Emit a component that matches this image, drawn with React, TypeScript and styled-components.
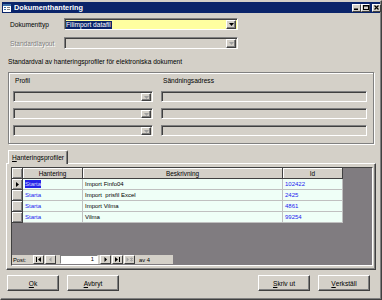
import React from "react";
import styled, { createGlobalStyle } from "styled-components";

const rows = [
  { action: "Starta", text: "Import Finfo04", id: "102422" },
  { action: "Starta", text: "Import  prisfil Excel", id: "2425" },
  { action: "Starta", text: "Import Vilma", id: "4861" },
  { action: "Starta", text: "Vilma", id: "99254" },
];

const GlobalStyle = createGlobalStyle`
  html, body { margin: 0; padding: 0; background: #d4d0c8; }
  body {
    font-family: "Liberation Sans", Arial, sans-serif;
    font-size: 6.6px;
    color: #000;
  }
`;

const Arrow = ({ disabled }: { disabled?: boolean }) => (
  <svg width="5" height="3" viewBox="0 0 5 3">
    <path d="M0 0h5L2.5 3z" fill={disabled ? "#a0a0a0" : "#000"} />
  </svg>
);

const NavGlyph = ({ kind }: { kind: string }) => (
  <svg width="9" height="5" viewBox="0 0 9 5">
    {kind === "first" && (
      <>
        <rect x="2" y="0" width="1" height="5" fill="#000" />
        <path d="M7 0v5L4 2.5z" fill="#000" />
      </>
    )}
    {kind === "prev" && <path d="M5.5 0v5L3 2.5z" fill="#a0a0a0" />}
    {kind === "next" && <path d="M3.5 0v5L6 2.5z" fill="#000" />}
    {kind === "last" && (
      <>
        <path d="M2 0v5L5 2.5z" fill="#000" />
        <rect x="6" y="0" width="1" height="5" fill="#000" />
      </>
    )}
    {kind === "new" && (
      <>
        <path d="M1.5 0v5L4 2.5z" fill="#a0a0a0" />
        <path d="M5 1l3 3M8 1L5 4M6.5 0.5v4" stroke="#a0a0a0" strokeWidth="0.8" />
      </>
    )}
  </svg>
);

export default function App() {
  return (
    <>
      <GlobalStyle />
      <Window>
        <TitleBar>
          <TitleIcon width="8" height="8" viewBox="0 0 8 8">
            <rect x="0" y="0" width="8" height="8" fill="#fff" />
            <rect x="0" y="0" width="8" height="2" fill="#3a6ea5" />
            <rect x="1" y="3" width="2" height="1" fill="#3a6ea5" />
            <rect x="4" y="3" width="3" height="1" fill="#808080" />
            <rect x="1" y="5" width="2" height="1" fill="#3a6ea5" />
            <rect x="4" y="5" width="3" height="1" fill="#808080" />
          </TitleIcon>
          <TitleText>Dokumenthantering</TitleText>
          <Controls>
            <CtrlButton>
              <svg width="5" height="5" viewBox="0 0 5 5">
                <rect x="0" y="3.5" width="4" height="1.5" fill="#000" />
              </svg>
            </CtrlButton>
            <CtrlButton>
              <svg width="6" height="5" viewBox="0 0 6 5">
                <rect x="0.5" y="0.5" width="5" height="4" fill="none" stroke="#000" />
                <rect x="0" y="0" width="6" height="1.5" fill="#000" />
              </svg>
            </CtrlButton>
            <CtrlButton $gap>
              <svg width="5" height="5" viewBox="0 0 5 5">
                <path d="M0.5 0.5l4 4M4.5 0.5l-4 4" stroke="#000" strokeWidth="1.2" />
              </svg>
            </CtrlButton>
          </Controls>
        </TitleBar>

        <FieldRow $top={5}>
          <FieldLabel>Dokumenttyp</FieldLabel>
          <Combo $width={174} $bg="#ffffa0">
            <ComboText>
              <Selected>Filimport datafil</Selected>
            </ComboText>
            <DropButton>
              <Arrow />
            </DropButton>
          </Combo>
        </FieldRow>
        <FieldRow $top={7}>
          <FieldLabel $disabled>Standardlayout</FieldLabel>
          <Combo $width={174}>
            <ComboText />
            <DropButton>
              <Arrow disabled />
            </DropButton>
          </Combo>
        </FieldRow>

        <Caption>Standardval av hanteringsprofiler för elektroniska dokument</Caption>
        <GroupBox>
          <ColLabel>Profil</ColLabel>
          <ColLabel>Sändningsadress</ColLabel>
          {[0, 1, 2].map((i) => (
            <React.Fragment key={i}>
              <Combo $width={140} $height={11}>
                <ComboText />
                <DropButton>
                  <Arrow disabled />
                </DropButton>
              </Combo>
              <Combo $width={206} $height={11}>
                <ComboText />
              </Combo>
            </React.Fragment>
          ))}
        </GroupBox>

        <TabStrip>
          <Tab>
            <u>H</u>anteringsprofiler
          </Tab>
        </TabStrip>
        <TabPanel>
          <Sheet>
            <SheetGrid>
              <Selector />
              <HeadCell>Hantering</HeadCell>
              <HeadCell>Beskrivning</HeadCell>
              <HeadCell>Id</HeadCell>
              {rows.map((r, i) => (
                <React.Fragment key={r.id}>
                  <Selector>
                    {i === 0 && (
                      <svg width="3" height="5" viewBox="0 0 3 5">
                        <path d="M0 0v5l3-2.5z" fill="#000" />
                      </svg>
                    )}
                  </Selector>
                  <Cell $link>
                    {i === 0 ? <CellSelected>{r.action}</CellSelected> : r.action}
                  </Cell>
                  <Cell>{r.text}</Cell>
                  <Cell $link>{r.id}</Cell>
                </React.Fragment>
              ))}
            </SheetGrid>
            <SheetFill />
            <NavBar>
              <NavLabel>Post:</NavLabel>
              <NavButton>
                <NavGlyph kind="first" />
              </NavButton>
              <NavButton>
                <NavGlyph kind="prev" />
              </NavButton>
              <RecordBox>1</RecordBox>
              <NavButton>
                <NavGlyph kind="next" />
              </NavButton>
              <NavButton>
                <NavGlyph kind="last" />
              </NavButton>
              <NavButton>
                <NavGlyph kind="new" />
              </NavButton>
              <NavCount>av 4</NavCount>
            </NavBar>
          </Sheet>
        </TabPanel>

        <ButtonRow>
          <ButtonGroup>
            <PushButton>
              <u>O</u>k
            </PushButton>
            <PushButton>
              <u>A</u>vbryt
            </PushButton>
          </ButtonGroup>
          <ButtonGroup>
            <PushButton>
              <u>S</u>kriv ut
            </PushButton>
            <PushButton>
              <u>V</u>erkställ
            </PushButton>
          </ButtonGroup>
        </ButtonRow>
      </Window>
    </>
  );
}

const Window = styled.div`
  box-sizing: border-box;
  width: 382px;
  height: 300px;
  padding: 1px;
  background: #d4d0c8;
  border: 1px solid;
  border-color: #d4d0c8 #404040 #404040 #d4d0c8;
  box-shadow: inset -1px -1px #808080;
  display: flex;
  flex-direction: column;
  overflow: hidden;
`;

const TitleBar = styled.div`
  height: 11px;
  display: flex;
  align-items: center;
  padding: 0 0 0 1px;
  background: #0a246a;
`;

const TitleIcon = styled.svg`
  flex: none;
`;

const TitleText = styled.span`
  margin-left: 3px;
  color: #fff;
  font-weight: bold;
  font-size: 7.3px;
  line-height: 11px;
  flex: 1;
`;

const Controls = styled.div`
  display: flex;
  align-items: center;
  margin-right: -1px;
`;

const CtrlButton = styled.div<{ $gap?: boolean }>`
  box-sizing: border-box;
  width: 9px;
  height: 8px;
  margin-left: ${({ $gap }) => ($gap ? "2px" : "0")};
  background: #d4d0c8;
  border: 1px solid;
  border-color: #fff #404040 #404040 #fff;
  display: flex;
  align-items: center;
  justify-content: center;
`;

const FieldRow = styled.div<{ $top: number }>`
  display: flex;
  align-items: center;
  height: 12px;
  margin: ${({ $top }) => $top}px 0 0 8px;
`;

const FieldLabel = styled.span<{ $disabled?: boolean }>`
  width: 54px;
  color: ${({ $disabled }) => ($disabled ? "#808080" : "#000")};
  text-shadow: ${({ $disabled }) => ($disabled ? "1px 1px #fff" : "none")};
`;

const Combo = styled.div<{ $width: number; $height?: number; $bg?: string }>`
  box-sizing: border-box;
  width: ${({ $width }) => $width}px;
  height: ${({ $height }) => $height ?? 12}px;
  display: flex;
  background: ${({ $bg }) => $bg ?? "#d4d0c8"};
  border: 1px solid;
  border-color: #808080 #fff #fff #808080;
  box-shadow: inset 1px 1px #404040;
  padding: 1px 1px 0 1px;
`;

const ComboText = styled.div`
  flex: 1;
  display: flex;
  align-items: center;
  overflow: hidden;
  white-space: nowrap;
`;

const Selected = styled.span`
  background: #0a246a;
  color: #fff;
  line-height: 8px;
  padding-right: 1px;
`;

const DropButton = styled.div`
  box-sizing: border-box;
  width: 10px;
  background: #d4d0c8;
  border: 1px solid;
  border-color: #fff #404040 #404040 #fff;
  box-shadow: inset -1px -1px #808080;
  display: flex;
  align-items: center;
  justify-content: center;
`;

const Caption = styled.div`
  margin: 9px 0 0 6px;
  line-height: 8px;
  height: 8px;
`;

const GroupBox = styled.div`
  box-sizing: border-box;
  margin: 6px 0 0 6px;
  width: 366px;
  height: 72px;
  border: 1px solid #808080;
  box-shadow: inset 1px 1px #fff, 1px 1px #fff;
  display: grid;
  grid-template-columns: 140px 206px;
  grid-template-rows: 8px repeat(3, 11px);
  column-gap: 8px;
  row-gap: 6px;
  padding: 4px 0 0 4px;
`;

const ColLabel = styled.div`
  padding-left: 2px;
  line-height: 8px;
`;

const TabStrip = styled.div`
  display: flex;
  margin: 6px 0 0 4px;
  height: 13px;
`;

const Tab = styled.div`
  box-sizing: border-box;
  margin-left: 2px;
  width: 60px;
  height: 14px;
  border: 1px solid;
  border-bottom: none;
  border-color: #fff #404040 transparent #fff;
  border-top-right-radius: 2px;
  box-shadow: inset -1px 0 #808080;
  background: #d4d0c8;
  padding: 3px 0 0 3px;
  line-height: 8px;
  position: relative;
  z-index: 1;
`;

const TabPanel = styled.div`
  box-sizing: border-box;
  margin-left: 4px;
  width: 370px;
  height: 107px;
  border: 1px solid;
  border-color: #fff #404040 #404040 #fff;
  box-shadow: inset -1px -1px #808080;
  padding: 3px 2px 3px 4px;
  display: flex;
`;

const Sheet = styled.div`
  box-sizing: border-box;
  flex: 1;
  display: flex;
  flex-direction: column;
  background: #807c80;
  border: 1px solid;
  border-color: #404040 #fff #fff #404040;
  padding-bottom: 1px;
`;

const SheetGrid = styled.div`
  display: grid;
  grid-template-columns: 11px 60px 200px 60px;
  grid-auto-rows: 11px;
`;

const Selector = styled.div`
  box-sizing: border-box;
  background: #d4d0c8;
  border-right: 1px solid #404040;
  border-bottom: 1px solid #404040;
  box-shadow: inset 1px 1px #fff, inset -1px -1px #808080;
  display: flex;
  align-items: center;
  justify-content: center;
`;

const HeadCell = styled.div`
  box-sizing: border-box;
  background: #d4d0c8;
  border-right: 1px solid #404040;
  border-bottom: 1px solid #404040;
  box-shadow: inset 1px 1px #fff;
  display: flex;
  align-items: center;
  justify-content: center;
  font-size: 6.4px;
`;

const Cell = styled.div<{ $link?: boolean }>`
  box-sizing: border-box;
  background: #effff7;
  border-right: 1px solid #c0c0c0;
  border-bottom: 1px solid #c0c0c0;
  display: flex;
  align-items: center;
  padding-left: 2px;
  font-size: 6px;
  white-space: pre;
  color: ${({ $link }) => ($link ? "#1c1cf0" : "#000")};
`;

const CellSelected = styled.span`
  background: #2424e8;
  color: #d8d8ff;
  line-height: 8px;
`;

const SheetFill = styled.div`
  flex: 1;
`;

const NavBar = styled.div`
  display: flex;
  align-items: center;
  height: 9px;
  width: 160px;
  background: #d4d0c8;
  padding-left: 1px;
  font-size: 5.8px;
`;

const NavLabel = styled.span`
  width: 20px;
`;

const NavButton = styled.div`
  box-sizing: border-box;
  width: 11px;
  height: 9px;
  margin-right: 1px;
  background: #d4d0c8;
  border: 1px solid;
  border-color: #fff #404040 #404040 #fff;
  display: flex;
  align-items: center;
  justify-content: center;
`;

const RecordBox = styled.div`
  box-sizing: border-box;
  width: 38px;
  height: 9px;
  margin: 0 2px 0 3px;
  background: #fff;
  border: 1px solid;
  border-color: #808080 #fff #fff #808080;
  text-align: right;
  padding-right: 3px;
  line-height: 7px;
`;

const NavCount = styled.span`
  margin-left: 3px;
`;

const ButtonRow = styled.div`
  display: flex;
  justify-content: space-between;
  margin: 5px 10px 0 5px;
`;

const ButtonGroup = styled.div`
  display: flex;
  gap: 8px;
`;

const PushButton = styled.div`
  box-sizing: border-box;
  width: 52px;
  height: 16px;
  background: #d4d0c8;
  border: 1px solid;
  border-color: #fff #404040 #404040 #fff;
  box-shadow: inset -1px -1px #808080;
  display: flex;
  align-items: center;
  justify-content: center;
`;
